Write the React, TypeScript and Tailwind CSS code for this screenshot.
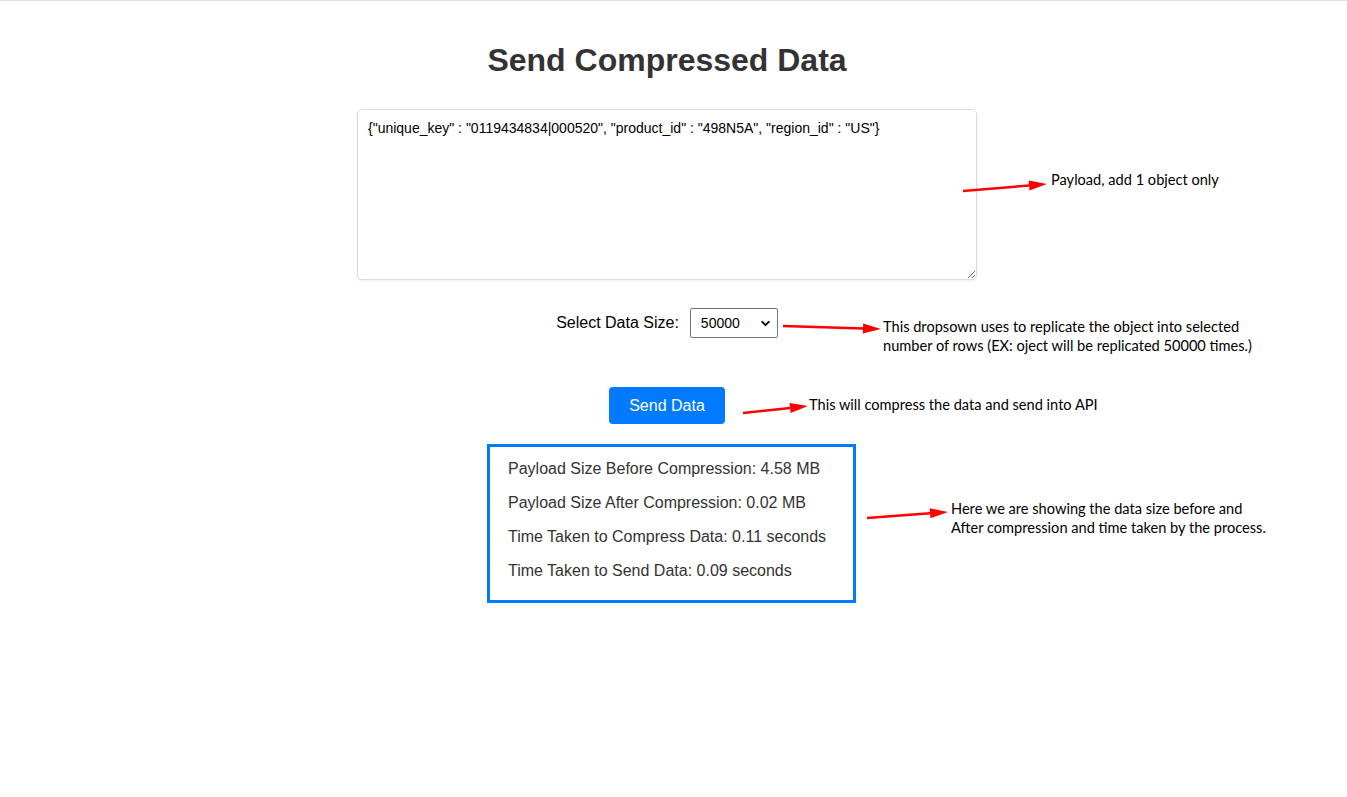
import { ChevronDown } from "lucide-react";

const payload =
  '{"unique_key" : "0119434834|000520", "product_id" : "498N5A", "region_id" : "US"}';

const results = [
  "Payload Size Before Compression: 4.58 MB",
  "Payload Size After Compression: 0.02 MB",
  "Time Taken to Compress Data: 0.11 seconds",
  "Time Taken to Send Data: 0.09 seconds",
];

// red annotation arrows: [x1, y1, x2, y2]
const arrows = [
  [963, 190, 1047, 183],
  [783, 325, 881, 328],
  [743, 412, 808, 405],
  [867, 517, 948, 511],
];

const Arrow = ({ a }: { a: number[] }) => {
  const [x1, y1, x2, y2] = a;
  const ang = Math.atan2(y2 - y1, x2 - x1);
  const len = 18;
  const half = 5;
  const bx = x2 - len * Math.cos(ang);
  const by = y2 - len * Math.sin(ang);
  const px = -Math.sin(ang) * half;
  const py = Math.cos(ang) * half;
  return (
    <g>
      <line x1={x1} y1={y1} x2={bx} y2={by} stroke="#ff0000" strokeWidth="2.5" />
      <polygon
        points={`${x2},${y2} ${bx + px},${by + py} ${bx - px},${by - py}`}
        fill="#ff0000"
      />
    </g>
  );
};

const Note = ({ className, lines }: { className: string; lines: string[] }) => (
  <div
    className={`absolute text-[14.6px] leading-[19px] text-black whitespace-nowrap ${className}`}
    style={{ fontFamily: "Lato, 'Open Sans', sans-serif" }}
  >
    {lines.map((l) => (
      <div key={l}>{l}</div>
    ))}
  </div>
);

export default function App() {
  return (
    <div
      className="relative w-[1347px] h-[797px] bg-white border-t border-[#dde3dd] overflow-hidden text-[#333]"
      style={{ fontFamily: "'Liberation Sans', Arial, sans-serif" }}
    >
      <div className="w-[1334px] flex flex-col items-center">
        <h1 className="mt-[41px] text-[32px] leading-[37px] font-bold text-[#333]">
          Send Compressed Data
        </h1>

        <textarea
          className="mt-[30px] w-[620px] h-[171px] border border-[#dcdcdc] rounded-[5px] shadow-[0_1px_3px_rgba(0,0,0,0.08)] px-[10px] py-[9px] text-[14px] leading-[18px] text-black outline-none"
          defaultValue={payload}
        />

        <div className="mt-[28px] flex items-center">
          <span className="text-[16px] text-black mr-[11px]">Select Data Size:</span>
          <div className="relative w-[88px] h-[30px] border border-[#767676] rounded-[2px] bg-white flex items-center">
            <span className="pl-[10px] text-[14px] text-black">50000</span>
            <ChevronDown
              className="absolute right-[5px] top-[8px] w-[13px] h-[13px] text-black"
              strokeWidth={3.5}
            />
          </div>
        </div>

        <button className="mt-[49px] w-[116px] h-[37px] rounded-[4px] bg-[#007bff] text-white text-[16px]">
          Send Data
        </button>

        <div className="mt-[20px] ml-[9px] w-[369px] h-[159px] border-[3px] border-[#007bff] pl-[18px] pt-[5px] text-[16px] leading-[34px] text-[#333]">
          {results.map((r) => (
            <div key={r}>{r}</div>
          ))}
        </div>
      </div>

      <svg className="absolute inset-0 pointer-events-none" width="1347" height="797">
        {arrows.map((a, i) => (
          <Arrow key={i} a={a} />
        ))}
      </svg>

      <Note className="left-[1051px] top-[169px]" lines={["Payload, add 1 object only"]} />
      <Note
        className="left-[883px] top-[316px]"
        lines={[
          "This dropsown uses to replicate the object into selected",
          "number of rows (EX: oject will be replicated 50000 times.)",
        ]}
      />
      <Note
        className="left-[809px] top-[394px]"
        lines={["This will compress the data and send into API"]}
      />
      <Note
        className="left-[951px] top-[498px]"
        lines={[
          "Here we are showing the data size before and",
          "After compression and time taken by the process.",
        ]}
      />
    </div>
  );
}
